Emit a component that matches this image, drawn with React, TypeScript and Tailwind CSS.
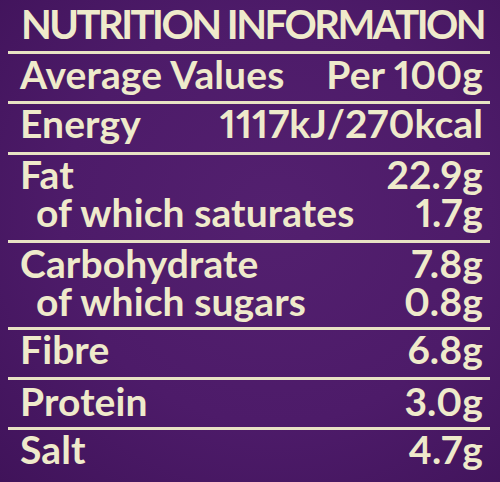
import React from 'react';

type Row = {
  label: string;
  value: string;
  sub?: { label: string; value: string };
  h: string;
  pt: string;
};

const rows: Row[] = [
  { label: 'Average Values', value: 'Per 100g', h: 'h-[50px]', pt: 'pt-[1px]' },
  { label: 'Energy', value: '1117kJ/270kcal', h: 'h-[51px]', pt: 'pt-0' },
  { label: 'Fat', value: '22.9g', sub: { label: 'of which saturates', value: '1.7g' }, h: 'h-[88px]', pt: 'pt-0' },
  { label: 'Carbohydrate', value: '7.8g', sub: { label: 'of which sugars', value: '0.8g' }, h: 'h-[87px]', pt: 'pt-[1px]' },
  { label: 'Fibre', value: '6.8g', h: 'h-[50px]', pt: 'pt-0' },
  { label: 'Protein', value: '3.0g', h: 'h-[50px]', pt: 'pt-[2px]' },
  { label: 'Salt', value: '4.7g', h: 'h-[52px]', pt: 'pt-0' },
];

const App: React.FC = () => {
  return (
    <div
      className="w-[500px] h-[482px] overflow-hidden pl-2 pr-[10px] text-[#efeacb] bg-[radial-gradient(ellipse_at_55%_45%,#53206f_0%,#4d1b69_55%,#40135a_100%)]"
      style={{ fontFamily: 'Lato, "Open Sans", sans-serif' }}
    >
      <div className="h-[54px] border-b-[3px] border-[#e8e2c4] pl-[13px] pt-[2px]">
        <h1 className="text-[40px] leading-[44px] font-bold tracking-[-2.5px] whitespace-nowrap">
          NUTRITION INFORMATION
        </h1>
      </div>
      {rows.map((r, i) => (
        <div
          key={r.label}
          className={`${r.h} ${r.pt} ${i < rows.length - 1 ? 'border-b-[3px] border-[#e8e2c4]' : ''} pl-3 pr-[7px] text-[39px] leading-[38px] font-bold tracking-[0.1px] proportional-nums`}
        >
          <div className="flex justify-between">
            <span>{r.label}</span>
            <span>{r.value}</span>
          </div>
          {r.sub && (
            <div className="flex justify-between pl-[16px]">
              <span>{r.sub.label}</span>
              <span>{r.sub.value}</span>
            </div>
          )}
        </div>
      ))}
    </div>
  );
};

export default App;
